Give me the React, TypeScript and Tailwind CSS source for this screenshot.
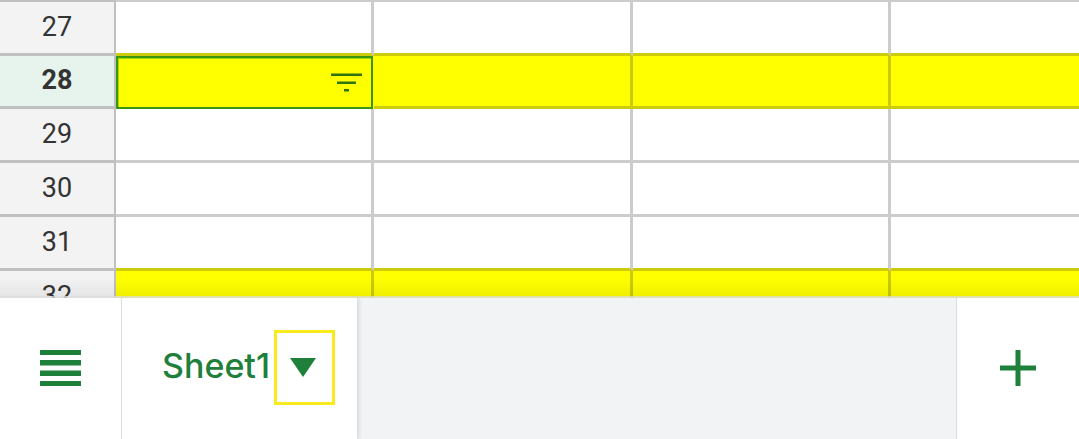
import clsx from 'clsx'

type Row = {
  number: number
  filled?: boolean
}

const rows: Row[] = [
  { number: 27 },
  { number: 28, filled: true },
  { number: 29 },
  { number: 30 },
  { number: 31 },
  { number: 32, filled: true },
]

const columns = ['A', 'B', 'C', 'D']
const selectedRow = 28

function FilterIcon() {
  return (
    <svg width="31" height="20" viewBox="0 0 31 20" fill="#2f740c" aria-hidden="true">
      <rect x="0" y="0.5" width="31" height="2.5" />
      <rect x="6" y="8.5" width="19" height="2.5" />
      <rect x="13" y="16" width="5" height="2.5" />
    </svg>
  )
}

function Grid() {
  return (
    <table className="w-full table-fixed border-separate border-spacing-0">
      <colgroup>
        <col className="w-[116px]" />
        <col className="w-[258px]" />
        <col className="w-[259px]" />
        <col className="w-[258px]" />
        <col />
      </colgroup>
      <tbody>
        {rows.map((row, i) => {
          const selected = row.number === selectedRow
          const nextFilled = rows[i + 1]?.filled
          const line = row.filled || nextFilled ? 'border-b-[#cccc0c]' : 'border-b-[#cccccc]'

          return (
            <tr key={row.number} className={clsx(i === 0 ? 'h-[56px]' : selected ? 'h-[53px]' : 'h-[54px]')}>
              <th
                scope="row"
                className={clsx(
                  'border-b-[3px] border-r-2 border-[#c0c0c0] p-0 pb-0.5 text-center align-middle text-[27px] leading-8 text-[#333333]',
                  i === 0 && 'border-t-2',
                  selected ? 'bg-[#e6f4ed] font-bold' : 'bg-[#f3f3f3] font-normal',
                )}
              >
                {row.number}
              </th>
              {columns.map((column) => {
                const active = selected && column === 'A'
                if (active) {
                  return (
                    <td key={column} className="h-[53px] border-r border-r-[#ffff00] bg-[#ffff00] p-0">
                      <div className="flex h-[53px] items-center justify-end border-2 border-[#38960f] pr-[9px] shadow-[inset_1px_1px_0_#a3d80a]">
                        <button type="button" aria-label="Filter column">
                          <FilterIcon />
                        </button>
                      </div>
                    </td>
                  )
                }
                return (
                  <td
                    key={column}
                    className={clsx(
                      'border-b-[3px] p-0',
                      line,
                      i === 0 && 'border-t-2 border-t-[#cccccc]',
                      column !== 'D' && 'border-r-[3px]',
                      row.filled ? 'border-r-[#cccc0c] bg-[#ffff00]' : 'border-r-[#cccccc] bg-white',
                    )}
                  />
                )
              })}
            </tr>
          )
        })}
      </tbody>
    </table>
  )
}

function SheetBar() {
  return (
    <footer className="flex h-[141px] shrink-0 bg-[#f1f3f4] text-[#1e803b]">
      <button
        type="button"
        aria-label="All sheets"
        className="flex w-[122px] items-center justify-center border-r border-[#dadce0] bg-white pb-0.5"
      >
        <svg width="41" height="36" viewBox="0 0 41 36" fill="currentColor" aria-hidden="true">
          <rect y="0" width="41" height="5" />
          <rect y="10" width="41" height="5.5" />
          <rect y="20.5" width="41" height="5.5" />
          <rect y="31" width="41" height="5" />
        </svg>
      </button>

      {/* Active tab */}
      <div className="flex w-[235px] items-center justify-between bg-white pb-0.5 pl-10 pr-[22px] shadow-[1px_0_5px_rgba(0,0,0,0.16)] [clip-path:inset(0_-12px_0_0)]">
        <button type="button" className="pb-1 font-['Inter',sans-serif] text-[34px] font-medium leading-10">
          Sheet1
        </button>
        <button
          type="button"
          aria-label="Sheet1 options"
          className="flex h-[75px] w-[61px] shrink-0 items-center justify-center border-[3px] border-[#f9eb1e] pr-1"
        >
          <svg width="26" height="19" viewBox="0 0 26 19" fill="currentColor" aria-hidden="true">
            <path d="M0 0h26L13 19z" />
          </svg>
        </button>
      </div>

      <button
        type="button"
        aria-label="Add sheet"
        className="ml-auto flex w-[123px] items-center justify-center border-l border-[#dadce0] bg-white pb-0.5"
      >
        <svg width="36" height="36" viewBox="0 0 36 36" fill="currentColor" aria-hidden="true">
          <path d="M15.5 0h5v15.5H36v5H20.5V36h-5V20.5H0v-5h15.5z" />
        </svg>
      </button>
    </footer>
  )
}

export default function App() {
  return (
    <div className="flex h-screen flex-col overflow-hidden bg-white font-['Roboto',sans-serif]">
      <main className="relative min-h-0 flex-1 overflow-hidden">
        <Grid />
        {/* Shade cast by the bar over the last row */}
        <div className="pointer-events-none absolute inset-x-0 bottom-0 h-5 border-b-2 border-[#dadada]/80 bg-linear-to-b from-transparent to-black/6" />
      </main>
      <SheetBar />
    </div>
  )
}
